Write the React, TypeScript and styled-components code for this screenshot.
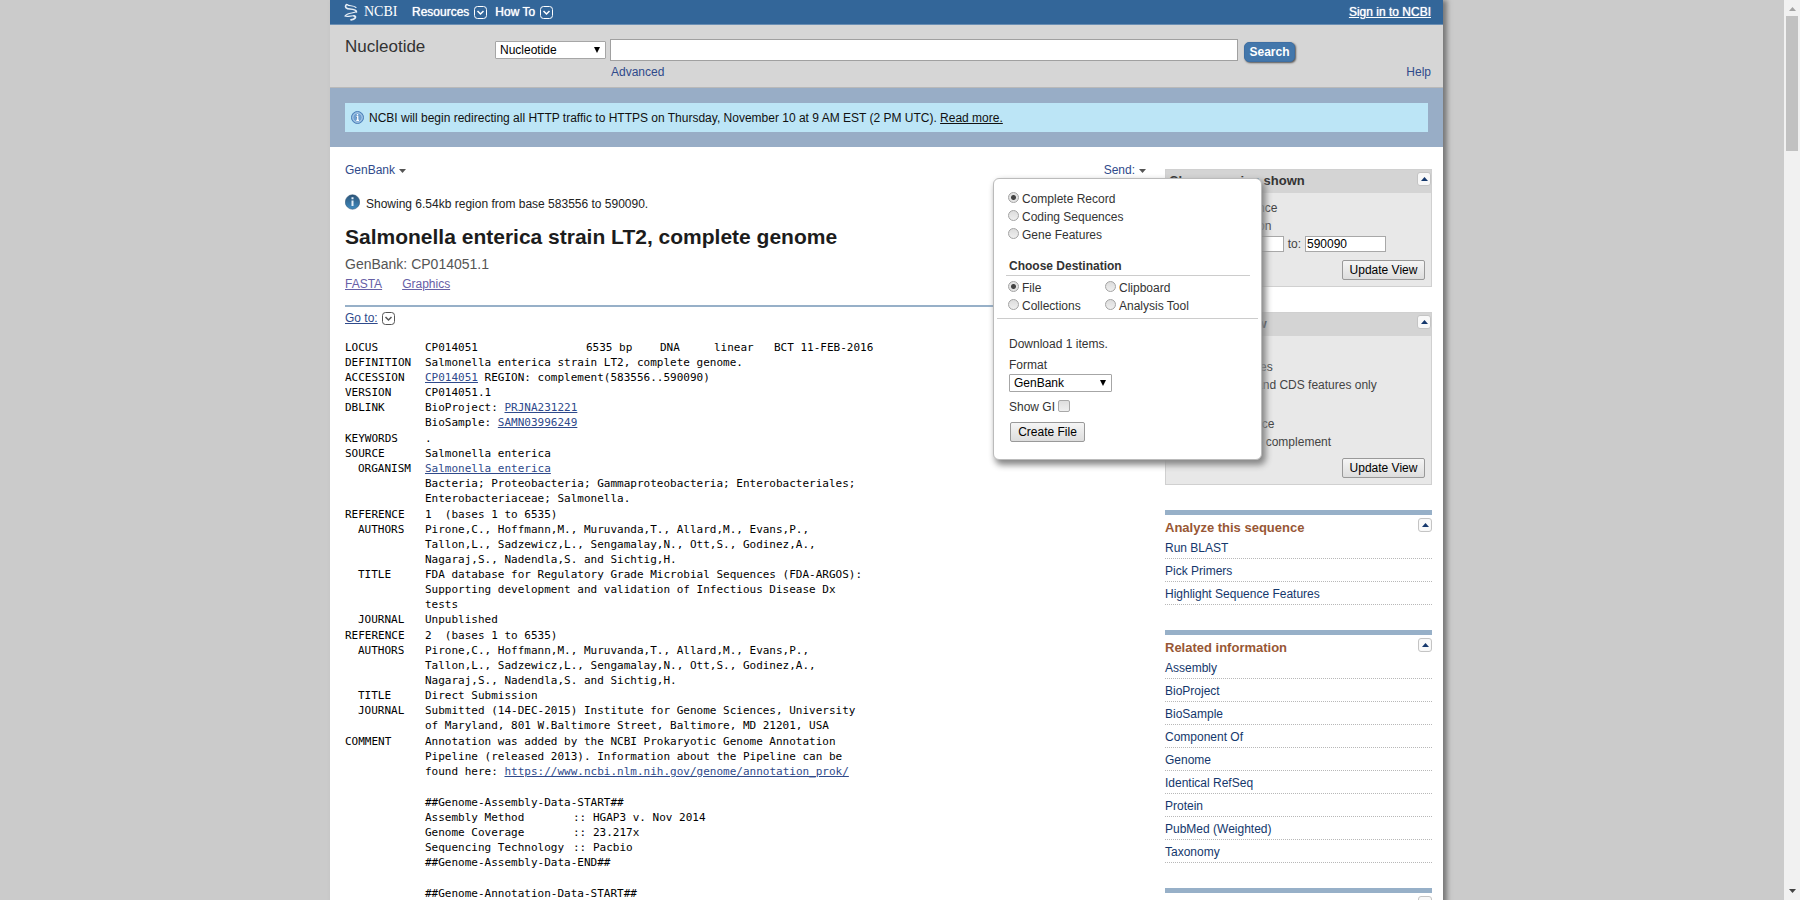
import React from "react";
import styled, { createGlobalStyle } from "styled-components";

const blueGrey = "#97b0c8";
const link = "#2f4a8b";

const GlobalStyle = createGlobalStyle`
  * { box-sizing: border-box; }
  body {
    margin: 0;
    background: #cbcbcb;
    color: #222;
    font: 12px/18px "Liberation Sans", Arial, sans-serif;
  }
  button, input, select { font-family: inherit; margin: 0; }
`;

const Viewport = styled.div`
  display: flex;
  height: 100vh;
  overflow: hidden;
`;

const ScrollArea = styled.div`
  flex: 1;
  min-width: 0;
  overflow: hidden;
  padding: 0 341px 0 330px;
`;

const ScrollRail = styled.div`
  display: flex;
  flex-direction: column;
  align-items: center;
  width: 16px;
  padding: 7px 0;
  background: #f1f1f1;
`;

const ScrollThumb = styled.div`
  width: 12px;
  height: 135px;
  margin: 5px 0 auto;
  background: #c1c1c1;
`;

const Page = styled.div`
  min-height: 100%;
  background: #fff;
  box-shadow: 4px 0 5px 0 #777;
`;

const TopBar = styled.nav`
  display: flex;
  align-items: center;
  height: 25px;
  padding: 0 12px 0 14px;
  background: #336699;
  border-bottom: 1px solid #6b8fb4;
`;

const Logo = styled.a`
  display: flex;
  align-items: center;
  gap: 6px;
  width: 68px;
  color: #fff;
  text-decoration: none;
  font: 14px/20px "Liberation Serif", "Times New Roman", serif;
`;

const TopMenu = styled.button`
  display: flex;
  align-items: center;
  gap: 5px;
  margin-right: 8px;
  padding: 0;
  border: 0;
  background: none;
  color: #fff;
  font-size: 12px;
  line-height: 18px;
  text-shadow: 0 0 1px #fff;
`;

const SignIn = styled.a`
  margin-left: auto;
  color: #fff;
  text-shadow: 0 0 1px #fff;
`;

const Header = styled.header`
  display: grid;
  grid-template-columns: 150px minmax(0, 1fr);
  padding: 12px 12px 0 15px;
  height: 63px;
  background: #d6d6d6;
  border-bottom: 1px solid #b9b9b9;
`;

const SiteTitle = styled.div`
  font-size: 17px;
  line-height: 20px;
  color: #333;
`;

const SearchForm = styled.form`
  display: flex;
  align-items: center;
  gap: 4px;
  height: 26px;
  padding-right: 136px;
`;

const SearchInput = styled.input`
  flex: 1;
  min-width: 0;
  height: 22px;
  border: 1px solid #a0a0a0;
  background: #fff;
`;

const SearchButton = styled.button`
  width: 51px;
  height: 20px;
  margin: 3px 0 0 2px;
  padding: 0;
  border: 1px solid #3f6fa3;
  border-radius: 5px;
  background: #4377ab;
  box-shadow: 1px 1px 2px #555;
  color: #fff;
  font-size: 12px;
  font-weight: bold;
  line-height: 16px;
`;

const SearchLinks = styled.div`
  display: flex;
  justify-content: space-between;
  padding-left: 116px;
`;

const PlainLink = styled.a`
  color: ${link};
  text-decoration: none;
`;

const SelectWrap = styled.span<{ $width: number }>`
  display: inline-grid;
  align-items: center;
  width: ${(p) => p.$width}px;
  & > * { grid-area: 1 / 1; }
  & > svg { justify-self: end; margin-right: 6px; pointer-events: none; }
`;

const NativeSelect = styled.select`
  appearance: none;
  height: 18px;
  padding: 0 4px;
  border: 1px solid #a6a6a6;
  border-radius: 1px;
  background: #fff;
  color: #000;
  font-size: 12px;
  line-height: 16px;
`;

const NoticeBand = styled.div`
  padding: 15px;
  background: #98adc6;
`;

const Notice = styled.div`
  display: flex;
  align-items: center;
  gap: 5px;
  height: 29px;
  padding-left: 6px;
  background: #bce5f6;
  color: #111;
  a { color: #111; }
`;

const Columns = styled.div`
  display: flex;
  align-items: flex-start;
  gap: 19px;
  padding: 14px 11px 0 15px;
`;

const Main = styled.main`
  flex: 1;
  min-width: 0;
`;

const Toolbar = styled.div`
  display: flex;
  justify-content: space-between;
  position: relative;
`;

const MenuButton = styled.button`
  display: flex;
  align-items: center;
  gap: 4px;
  padding: 0;
  border: 0;
  background: none;
  color: ${link};
  font-size: 12px;
  line-height: 18px;
  svg { margin-top: 2px; }
`;

const Region = styled.p`
  display: flex;
  align-items: center;
  gap: 6px;
  margin: 15px 0 0;
  svg { margin-bottom: 3px; }
`;

const Title = styled.h1`
  margin: 12px 0 0;
  font-size: 21px;
  line-height: 24px;
  color: #1c1c1c;
`;

const Accession = styled.p`
  margin: 6px 0 0;
  color: #555;
  font-size: 14px;
  line-height: 18px;
`;

const Formats = styled.div`
  display: flex;
  gap: 20px;
  margin-top: 2px;
  padding-bottom: 12px;
  border-bottom: 2px solid ${blueGrey};
  a { color: #6660a6; }
`;

const GoTo = styled.div`
  display: flex;
  align-items: center;
  gap: 4px;
  margin-top: 2px;
  a { color: ${link}; }
`;

const RecordText = styled.div`
  margin-top: 13px;
  color: #000;
  font: 11px/15px "DejaVu Sans Mono", "Liberation Mono", monospace;
  a { color: ${link}; }
`;

const Section = styled.section`
  padding-bottom: 1px;
`;

const Field = styled.div<{ $sub?: boolean }>`
  display: grid;
  grid-template-columns: ${(p) => (p.$sub ? 67 : 80)}px minmax(0, 1fr);
  padding-left: ${(p) => (p.$sub ? 13 : 0)}px;
  white-space: pre;
`;

const LocusLine = styled.div`
  display: grid;
  grid-template-columns: 161px 74px 54px 60px auto;
`;

const DataBlock = styled.div`
  margin: 15px 0 0 80px;
`;

const DataRow = styled.div`
  display: grid;
  grid-template-columns: 148px 20px auto;
`;

const SendMenu = styled.form`
  position: absolute;
  top: 17px;
  right: -116px;
  z-index: 2;
  width: 269px;
  height: 282px;
  padding: 11px 3px;
  border: 1px solid #bbb;
  border-radius: 6px;
  background: #fff;
  box-shadow: 3px 4px 6px 1px #888;
  color: #333;
`;

const ChoiceLabel = styled.label`
  display: flex;
  align-items: center;
  gap: 3px;
  line-height: 18px;
`;

const Radio = styled.input.attrs({ type: "radio" })`
  appearance: none;
  width: 11px;
  height: 11px;
  margin-bottom: 3px;
  border: 1px solid #a3a3a3;
  border-radius: 50%;
  background: linear-gradient(#dcdcdc, #efefef);
  &:checked { background: radial-gradient(circle, #444 0 2px, #e3e3e3 3px); }
`;

const CheckBox = styled.input.attrs({ type: "checkbox" })`
  appearance: none;
  width: 12px;
  height: 12px;
  margin-bottom: 3px;
  border: 1px solid #a8a8a8;
  border-radius: 2px;
  background: linear-gradient(#dedede, #efefef);
`;

const Choices = styled.div`
  padding: 0 11px;
`;

const Destination = styled.h2`
  margin: 13px 8px 3px 9px;
  padding: 0 3px;
  border-bottom: 1px solid #ccc;
  font-size: 12px;
  line-height: 18px;
`;

const DestinationGrid = styled.div`
  display: grid;
  grid-template-columns: 97px 1fr;
  padding: 0 11px 3px;
  border-bottom: 1px solid #ccc;
`;

const Options = styled.div`
  display: flex;
  flex-direction: column;
  align-items: flex-start;
  padding: 16px 12px 0;
`;

const FormatLabel = styled.label`
  display: grid;
  margin: 3px 0 6px;
`;

const PushButton = styled.button<{ $width: number }>`
  width: ${(p) => p.$width}px;
  height: 20px;
  padding: 0;
  border: 1px solid #999;
  border-radius: 2px;
  background: linear-gradient(#f5f5f5, #ddd);
  color: #000;
  font-size: 12px;
  line-height: 18px;
`;

const CreateButton = styled(PushButton)`
  margin: 6px 0 0 1px;
`;

const Sidebar = styled.aside`
  width: 267px;
  padding-top: 8px;
`;

const Panel = styled.section<{ $height: number }>`
  min-height: ${(p) => p.$height}px;
  display: flex;
  flex-direction: column;
  margin-bottom: 25px;
  border: 1px solid #d0d0d0;
  background: #e8e8e8;
  color: #444;
`;

const PanelHead = styled.div`
  display: flex;
  align-items: flex-start;
  justify-content: space-between;
  height: 23px;
  padding: 2px 0 0 3px;
  background: #d4d4d4;
  h2 { margin: 0; font-size: 13px; line-height: 18px; color: #333; }
`;

const PanelBody = styled.div`
  display: flex;
  flex: 1;
  flex-direction: column;
  padding: 6px 6px 6px 8px;
`;

const RangeRow = styled.div`
  display: flex;
  align-items: center;
  gap: 4px;
  padding-right: 39px;
  justify-content: flex-end;
  label { display: flex; align-items: center; gap: 4px; }
`;

const RangeInput = styled.input`
  width: 81px;
  height: 16px;
  padding: 0 1px;
  border: 1px solid #a8a8a8;
  font-size: 12px;
`;

const OptionTitle = styled.h3`
  margin: 0;
  font-size: 12px;
  font-weight: normal;
  line-height: 16px;
  label + & { margin-top: 5px; }
`;

const UpdateButton = styled(PushButton)`
  align-self: flex-end;
  margin-top: auto;
`;

const ToggleButton = styled.button`
  display: grid;
  place-items: center;
  width: 14px;
  height: 14px;
  padding: 0;
  border: 1px solid #c4c4c4;
  border-radius: 3px;
  background: #f8f8f8;
`;

const Portlet = styled.section`
  padding-top: 3px;
  margin-bottom: 25px;
  border-top: 5px solid ${blueGrey};
  ul { margin: 0; padding: 0; list-style: none; }
`;

const PortletHead = styled.div`
  display: flex;
  align-items: flex-start;
  justify-content: space-between;
  h2 { margin: 0; color: #985735; font-size: 13px; line-height: 20px; }
`;

const LinkItem = styled.li`
  height: 23px;
  padding-top: 3px;
  border-bottom: 1px dotted #b8b8b8;
  &:first-child { height: 21px; padding-top: 1px; }
  a { color: #14376c; text-decoration: none; }
`;

const Triangle = ({ up, w, h, color }: { up?: boolean; w: number; h: number; color: string }) => (
  <svg width={w} height={h} viewBox="0 0 10 10" preserveAspectRatio="none" aria-hidden="true">
    <path d={up ? "M0 10L5 0L10 10Z" : "M0 0H10L5 10Z"} fill={color} />
  </svg>
);

const BoxedChevron = ({ color }: { color: string }) => (
  <svg width="13" height="13" viewBox="0 0 13 13" fill="none" stroke={color} aria-hidden="true">
    <rect x="0.5" y="0.5" width="12" height="12" rx="3" />
    <path d="M3.5 5L6.5 8L9.5 5" strokeWidth="1.5" />
  </svg>
);

const HelixMark = () => (
  <svg width="14" height="18" viewBox="0 0 14 18" fill="none" stroke="#e6eef6" strokeLinecap="round" aria-hidden="true">
    <path d="M2.500 1.500C0 4.500 3 5.800 6 6C10 6.300 12.500 7 12.500 9" strokeWidth="1.600" />
    <path d="M3 1.500C5 3.500 9 2 12 4.500" strokeWidth="1.100" />
    <path d="M12.500 8.500C10 10.500 3 9.500 1 13C4 14 7 12.500 10 12.800" strokeWidth="1.200" />
    <path d="M10 12.800C13 13.500 11 16.500 7 16.800" strokeWidth="1.800" />
  </svg>
);

const NoticeIcon = () => (
  <svg width="13" height="13" viewBox="0 0 13 13" aria-hidden="true">
    <circle cx="6.500" cy="6.500" r="6" fill="#6f9fd0" stroke="#4c7fb8" />
    <circle cx="6.500" cy="6.500" r="4.700" fill="none" stroke="#d5e8f6" strokeWidth="0.700" />
    <path d="M6.500 3V4.500M5.500 5.700H6.700V9M5.300 9.300H8" stroke="#fff" strokeWidth="1.300" />
  </svg>
);

const InfoIcon = () => (
  <svg width="15" height="16" viewBox="0 0 15 16" aria-hidden="true">
    <defs>
      <linearGradient id="info" x1="0" y1="0" x2="0" y2="1">
        <stop offset="0" stopColor="#2d5579" />
        <stop offset="1" stopColor="#3f8bc0" />
      </linearGradient>
    </defs>
    <circle cx="7.500" cy="8" r="7.200" fill="url(#info)" stroke="#2c5476" strokeWidth="0.600" />
    <path d="M7.500 3.200V5.200M7.500 6.500V12" stroke="#e4eef7" strokeWidth="2" />
  </svg>
);

const Select = ({ label, value, width }: { label?: string; value: string; width: number }) => (
  <SelectWrap $width={width}>
    <NativeSelect aria-label={label} defaultValue={value}>
      <option>{value}</option>
    </NativeSelect>
    <Triangle w={6} h={6} color="#000" />
  </SelectWrap>
);

const Choice = ({ name, text, checked }: { name: string; text: string; checked?: boolean }) => (
  <ChoiceLabel>
    <Radio name={name} defaultChecked={checked} />
    {text}
  </ChoiceLabel>
);

const Toggle = () => (
  <ToggleButton type="button" aria-label="Collapse">
    <Triangle up w={7} h={4} color="#14376c" />
  </ToggleButton>
);

const LinkPortlet = ({ title, items }: { title?: string; items: string[] }) => (
  <Portlet>
    <PortletHead>
      {title ? <h2>{title}</h2> : <span />}
      <Toggle />
    </PortletHead>
    <ul>
      {items.map((item) => (
        <LinkItem key={item}>
          <a href="#">{item}</a>
        </LinkItem>
      ))}
    </ul>
  </Portlet>
);

const Entry = ({ name, sub, children }: { name: string; sub?: boolean; children: React.ReactNode }) => (
  <Field $sub={sub}>
    <span>{name}</span>
    <div>{children}</div>
  </Field>
);

const authors =
  "Pirone,C., Hoffmann,M., Muruvanda,T., Allard,M., Evans,P.,\nTallon,L., Sadzewicz,L., Sengamalay,N., Ott,S., Godinez,A.,\nNagaraj,S., Nadendla,S. and Sichtig,H.";

const assembly = [
  ["Assembly Method", "HGAP3 v. Nov 2014"],
  ["Genome Coverage", "23.217x"],
  ["Sequencing Technology", "Pacbio"],
];

const GenBankRecord = () => (
  <RecordText>
    <Section>
      <Entry name="LOCUS">
        <LocusLine>
          <span>CP014051</span>
          <span>6535 bp</span>
          <span>DNA</span>
          <span>linear</span>
          <span>BCT 11-FEB-2016</span>
        </LocusLine>
      </Entry>
      <Entry name="DEFINITION">Salmonella enterica strain LT2, complete genome.</Entry>
      <Entry name="ACCESSION">
        <a href="#">CP014051</a> REGION: complement(583556..590090)
      </Entry>
      <Entry name="VERSION">CP014051.1</Entry>
      <Entry name="DBLINK">
        <div>BioProject: <a href="#">PRJNA231221</a></div>
        <div>BioSample: <a href="#">SAMN03996249</a></div>
      </Entry>
    </Section>
    <Section>
      <Entry name="KEYWORDS">.</Entry>
      <Entry name="SOURCE">Salmonella enterica</Entry>
      <Entry name="ORGANISM" sub>
        <div><a href="#">Salmonella enterica</a></div>
        <div>{"Bacteria; Proteobacteria; Gammaproteobacteria; Enterobacteriales;\nEnterobacteriaceae; Salmonella."}</div>
      </Entry>
    </Section>
    <Section>
      <Entry name="REFERENCE">{"1  (bases 1 to 6535)"}</Entry>
      <Entry name="AUTHORS" sub>{authors}</Entry>
      <Entry name="TITLE" sub>
        {"FDA database for Regulatory Grade Microbial Sequences (FDA-ARGOS):\nSupporting development and validation of Infectious Disease Dx\ntests"}
      </Entry>
      <Entry name="JOURNAL" sub>Unpublished</Entry>
    </Section>
    <Section>
      <Entry name="REFERENCE">{"2  (bases 1 to 6535)"}</Entry>
      <Entry name="AUTHORS" sub>{authors}</Entry>
      <Entry name="TITLE" sub>Direct Submission</Entry>
      <Entry name="JOURNAL" sub>
        {"Submitted (14-DEC-2015) Institute for Genome Sciences, University\nof Maryland, 801 W.Baltimore Street, Baltimore, MD 21201, USA"}
      </Entry>
    </Section>
    <Section>
      <Entry name="COMMENT">
        <div>{"Annotation was added by the NCBI Prokaryotic Genome Annotation\nPipeline (released 2013). Information about the Pipeline can be"}</div>
        <div>found here: <a href="#">https://www.ncbi.nlm.nih.gov/genome/annotation_prok/</a></div>
      </Entry>
    </Section>
    <Section>
      <DataBlock>
        <div>##Genome-Assembly-Data-START##</div>
        {assembly.map(([key, value]) => (
          <DataRow key={key}>
            <span>{key}</span>
            <span>::</span>
            <span>{value}</span>
          </DataRow>
        ))}
        <div>##Genome-Assembly-Data-END##</div>
      </DataBlock>
    </Section>
    <Section>
      <DataBlock>##Genome-Annotation-Data-START##</DataBlock>
    </Section>
  </RecordText>
);

const SendPopup = () => (
  <SendMenu>
    <Choices>
      <Choice name="content" text="Complete Record" checked />
      <Choice name="content" text="Coding Sequences" />
      <Choice name="content" text="Gene Features" />
    </Choices>
    <Destination>Choose Destination</Destination>
    <DestinationGrid>
      <Choice name="destination" text="File" checked />
      <Choice name="destination" text="Clipboard" />
      <Choice name="destination" text="Collections" />
      <Choice name="destination" text="Analysis Tool" />
    </DestinationGrid>
    <Options>
      <span>Download 1 items.</span>
      <FormatLabel>
        Format
        <Select value="GenBank" width={103} />
      </FormatLabel>
      <ChoiceLabel>
        Show GI
        <CheckBox />
      </ChoiceLabel>
      <CreateButton type="button" $width={75}>Create File</CreateButton>
    </Options>
  </SendMenu>
);

export default function App() {
  return (
    <Viewport>
      <GlobalStyle />
      <ScrollArea>
        <Page>
          <TopBar>
            <Logo href="#">
              <HelixMark />
              NCBI
            </Logo>
            <TopMenu>
              Resources <BoxedChevron color="#fff" />
            </TopMenu>
            <TopMenu>
              How To <BoxedChevron color="#fff" />
            </TopMenu>
            <SignIn href="#">Sign in to NCBI</SignIn>
          </TopBar>
          <Header>
            <SiteTitle>Nucleotide</SiteTitle>
            <div>
              <SearchForm>
                <Select label="Database" value="Nucleotide" width={111} />
                <SearchInput aria-label="Search term" />
                <SearchButton type="button">Search</SearchButton>
              </SearchForm>
              <SearchLinks>
                <PlainLink href="#">Advanced</PlainLink>
                <PlainLink href="#">Help</PlainLink>
              </SearchLinks>
            </div>
          </Header>
          <NoticeBand>
            <Notice>
              <NoticeIcon />
              <span>
                NCBI will begin redirecting all HTTP traffic to HTTPS on Thursday, November 10 at 9 AM EST (2 PM UTC).{" "}
                <a href="#">Read more.</a>
              </span>
            </Notice>
          </NoticeBand>
          <Columns>
            <Main>
              <Toolbar>
                <MenuButton>
                  GenBank <Triangle w={7} h={4} color="#555" />
                </MenuButton>
                <MenuButton>
                  Send: <Triangle w={7} h={4} color="#555" />
                </MenuButton>
                <SendPopup />
              </Toolbar>
              <Region>
                <InfoIcon />
                Showing 6.54kb region from base 583556 to 590090.
              </Region>
              <Title>Salmonella enterica strain LT2, complete genome</Title>
              <Accession>GenBank: CP014051.1</Accession>
              <Formats>
                <a href="#">FASTA</a>
                <a href="#">Graphics</a>
              </Formats>
              <GoTo>
                <a href="#">Go to:</a>
                <BoxedChevron color="#555" />
              </GoTo>
              <GenBankRecord />
            </Main>
            <Sidebar>
              <Panel $height={118}>
                <PanelHead>
                  <h2>Change region shown</h2>
                  <Toggle />
                </PanelHead>
                <PanelBody>
                  <Choice name="region" text="Whole sequence" />
                  <Choice name="region" text="Selected region" checked />
                  <RangeRow>
                    <label>
                      from: <RangeInput defaultValue="583556" />
                    </label>
                    <label>
                      to: <RangeInput defaultValue="590090" />
                    </label>
                  </RangeRow>
                  <UpdateButton type="button" $width={83}>Update View</UpdateButton>
                </PanelBody>
              </Panel>
              <Panel $height={173}>
                <PanelHead>
                  <h2>Customize view</h2>
                  <Toggle />
                </PanelHead>
                <PanelBody>
                  <OptionTitle>Basic Features</OptionTitle>
                  <Choice name="features" text="Default features" checked />
                  <Choice name="features" text="Gene, RNA, and CDS features only" />
                  <OptionTitle>Display options</OptionTitle>
                  <ChoiceLabel>
                    <CheckBox />
                    Show sequence
                  </ChoiceLabel>
                  <ChoiceLabel>
                    <CheckBox />
                    Show reverse complement
                  </ChoiceLabel>
                  <UpdateButton type="button" $width={83}>Update View</UpdateButton>
                </PanelBody>
              </Panel>
              <LinkPortlet
                title="Analyze this sequence"
                items={["Run BLAST", "Pick Primers", "Highlight Sequence Features"]}
              />
              <LinkPortlet
                title="Related information"
                items={[
                  "Assembly",
                  "BioProject",
                  "BioSample",
                  "Component Of",
                  "Genome",
                  "Identical RefSeq",
                  "Protein",
                  "PubMed (Weighted)",
                  "Taxonomy",
                ]}
              />
              <LinkPortlet items={[]} />
            </Sidebar>
          </Columns>
        </Page>
      </ScrollArea>
      <ScrollRail>
        <Triangle up w={7} h={4} color="#a3a3a3" />
        <ScrollThumb />
        <Triangle w={7} h={4} color="#444" />
      </ScrollRail>
    </Viewport>
  );
}
